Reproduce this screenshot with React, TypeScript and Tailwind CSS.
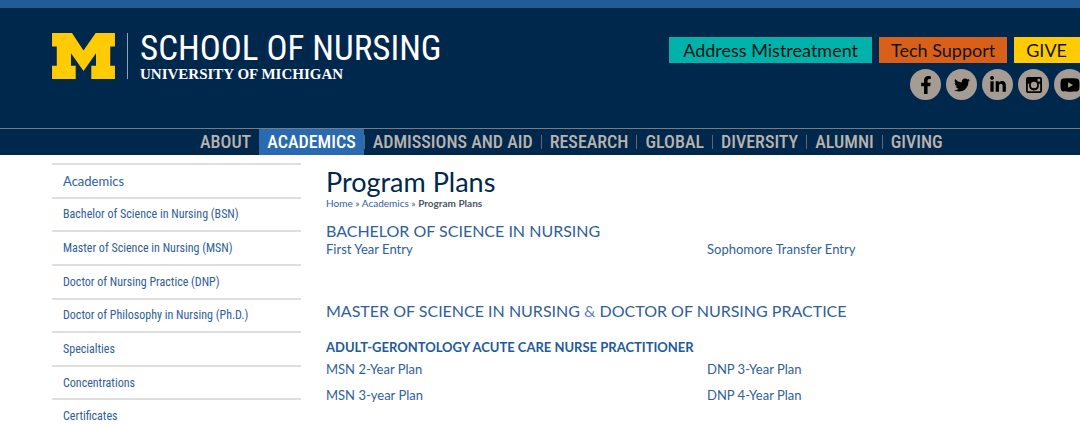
import type { ReactNode } from 'react';
import clsx from 'clsx';
import { FaFacebookF, FaTwitter, FaLinkedinIn, FaYoutube } from 'react-icons/fa';

const condensed = "font-['Roboto_Condensed','Liberation_Sans_Narrow',Roboto,sans-serif]";

const navItems = [
  'ABOUT',
  'ACADEMICS',
  'ADMISSIONS AND AID',
  'RESEARCH',
  'GLOBAL',
  'DIVERSITY',
  'ALUMNI',
  'GIVING',
];

const sideItems = [
  'Bachelor of Science in Nursing (BSN)',
  'Master of Science in Nursing (MSN)',
  'Doctor of Nursing Practice (DNP)',
  'Doctor of Philosophy in Nursing (Ph.D.)',
  'Specialties',
  'Concentrations',
  'Certificates',
];

function InstagramGlyph() {
  return (
    <svg viewBox="0 0 16 16" className="size-4" fill="currentColor" aria-hidden="true">
      <path
        fillRule="evenodd"
        d="M2 0h12a2 2 0 0 1 2 2v12a2 2 0 0 1-2 2H2a2 2 0 0 1-2-2V2a2 2 0 0 1 2-2zM11.6 1.8v2.6h2.6V1.8zM1.8 6.8v6.6c0 .5.3.8.8.8h10.8c.5 0 .8-.3.8-.8V6.8h-1.5a5 5 0 1 1-9.4 0zM8 4.8a3.2 3.2 0 1 0 0 6.4 3.2 3.2 0 0 0 0-6.4z"
      />
    </svg>
  );
}

const socials: { label: string; icon: ReactNode }[] = [
  { label: 'Facebook', icon: <FaFacebookF className="size-[18px]" /> },
  { label: 'Twitter', icon: <FaTwitter className="size-4" /> },
  { label: 'LinkedIn', icon: <FaLinkedinIn className="size-[18px]" /> },
  { label: 'Instagram', icon: <InstagramGlyph /> },
  { label: 'YouTube', icon: <FaYoutube className="size-5" /> },
];

function Logo() {
  return (
    <a href="#" className="flex h-[46px] text-white">
      <svg viewBox="38 100 186 136" className="h-[46px] w-[63px]" aria-hidden="true">
        <path
          fill="#ffcb05"
          d="M38 100H97L131 152L167 100H224V140H210V197H224V236H154V197H168V160L131 212L94 160V197H108V236H38V197H52V140H38Z"
        />
      </svg>
      <span className="ml-3 w-px bg-slate-400" />
      <span className="ml-3 flex flex-col">
        <span className={clsx(condensed, 'text-[35px] leading-8 whitespace-nowrap')}>SCHOOL OF NURSING</span>
        <span className="font-['Liberation_Serif',serif] text-[15px] leading-[18px] font-bold whitespace-nowrap">
          UNIVERSITY OF MICHIGAN
        </span>
      </span>
    </a>
  );
}

function PlanLink({ children }: { children: string }) {
  return (
    <a href="#" className="text-[13px] leading-4">
      {children}
    </a>
  );
}

export default function App() {
  return (
    <div className="overflow-x-hidden bg-white font-[Lato,sans-serif]">
      <header className="border-t-8 border-[#235a98] bg-[#00274c]">
        <div className="flex h-[120px] items-start justify-between pl-[52px]">
          <div className="pt-[25px]">
            <Logo />
          </div>
          <div className="mr-px flex flex-col items-end gap-1.5 pt-[29px]">
            <div className="flex gap-[7px] text-lg leading-[26px] text-[#131516]">
              <a href="#" className="bg-[#00b2a9] px-3.5">Address Mistreatment</a>
              <a href="#" className="bg-[#d86018] px-3">Tech Support</a>
              <a href="#" className="-mr-px bg-[#ffcb05] px-3 pr-[13px]">GIVE</a>
            </div>
            <div className="-mr-[6px] flex gap-[5px]">
              {socials.map((s) => (
                <a
                  key={s.label}
                  href="#"
                  aria-label={s.label}
                  className="flex size-[31px] items-center justify-center rounded-full bg-[#a59c94] text-black"
                >
                  {s.icon}
                </a>
              ))}
            </div>
          </div>
        </div>
        <nav
          className={clsx(condensed, 'flex border-t border-[#7d7c78] pl-[192px] text-lg leading-[26px] font-medium')}
        >
          {navItems.map((item) => (
            <a key={item} href="#" className="flex items-center whitespace-nowrap">
              <span className={clsx('px-2', item === 'ACADEMICS' ? 'bg-[#2a6ab0] text-white' : 'text-[#b9b3ae]')}>
                {item}
              </span>
              {item !== 'ABOUT' && item !== 'GIVING' && <span className="h-3.5 w-px bg-[#5d6873]" />}
            </a>
          ))}
        </nav>
      </header>

      <div className="flex text-[#2f6099]">
        <aside className="ml-[52px] w-[249px] shrink-0 pt-2">
          <ul className={clsx(condensed, 'flex min-h-[269px] flex-col text-xs')}>
            <li className="flex flex-1 items-center border-t-2 border-[#dfdfdf] px-[11px] font-[Lato,sans-serif] text-[13px] leading-5">
              <a href="#">Academics</a>
            </li>
            {sideItems.map((item) => (
              <li key={item} className="flex flex-1 items-center border-t-2 border-[#dfdfdf] px-[11px] leading-5">
                <a href="#">{item}</a>
              </li>
            ))}
          </ul>
        </aside>

        <main className="-mr-2 ml-[25px] min-w-0 flex-1 pt-3">
          <h1 className="text-[27px] leading-[30px] text-[#00274c]">Program Plans</h1>
          <p className="text-[10px] leading-3 text-gray-600">
            <a href="#" className="text-[#2f6099]">Home</a> »{' '}
            <a href="#" className="text-[#2f6099]">Academics</a> »{' '}
            <strong>Program Plans</strong>
          </p>

          <h2 className="mt-3 text-base leading-5">BACHELOR OF SCIENCE IN NURSING</h2>
          <div className="grid grid-cols-2">
            <PlanLink>First Year Entry</PlanLink>
            <PlanLink>Sophomore Transfer Entry</PlanLink>
          </div>

          <h2 className="mt-11 text-base leading-5">
            MASTER OF SCIENCE IN NURSING <span className="text-[#5f83c4]">&amp;</span> DOCTOR OF NURSING PRACTICE
          </h2>
          <h3 className="mt-4 text-[13px] leading-5 font-bold text-[#235a98]">
            ADULT-GERONTOLOGY ACUTE CARE NURSE PRACTITIONER
          </h3>
          <div className="mt-1 grid grid-cols-2 gap-y-2.5">
            <PlanLink>MSN 2-Year Plan</PlanLink>
            <PlanLink>DNP 3-Year Plan</PlanLink>
            <PlanLink>MSN 3-year Plan</PlanLink>
            <PlanLink>DNP 4-Year Plan</PlanLink>
          </div>
        </main>
      </div>
    </div>
  );
}
